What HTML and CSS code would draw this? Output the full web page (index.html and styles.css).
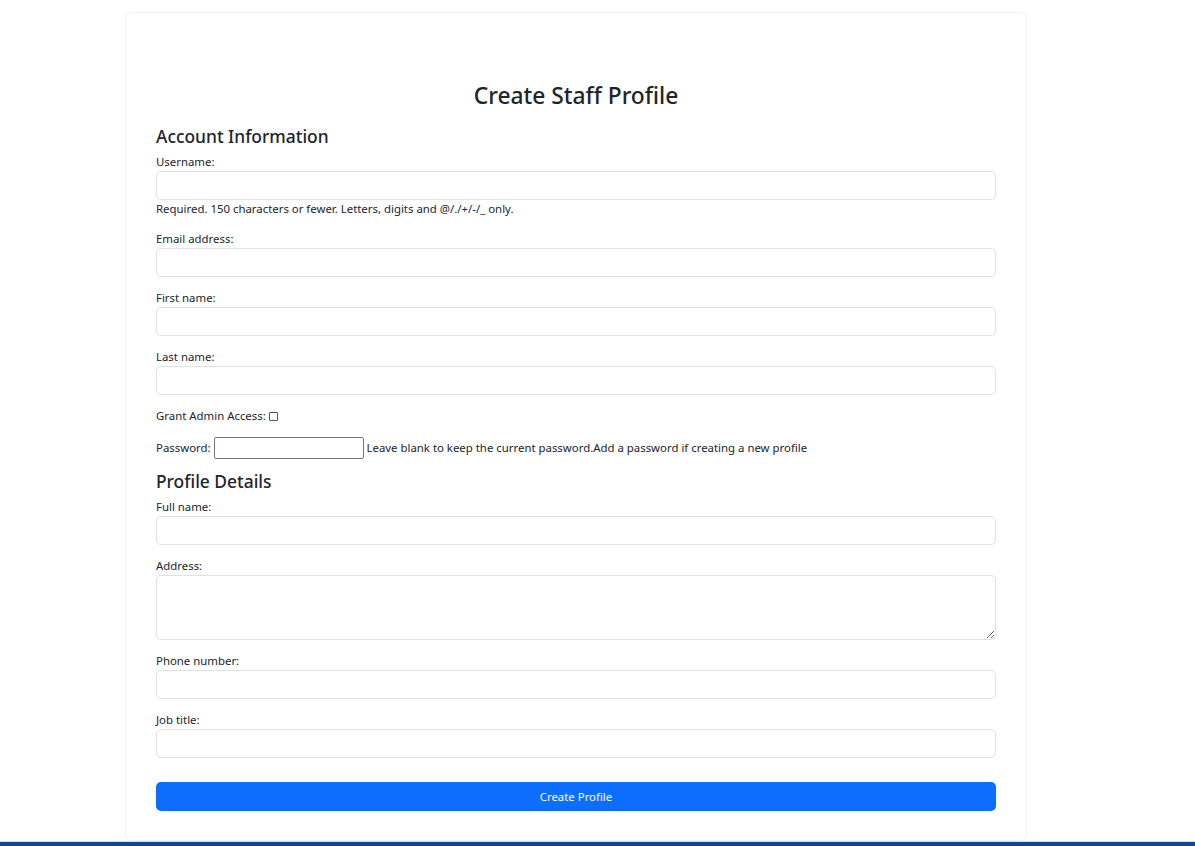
FILE: index.html
```html
<!DOCTYPE html>
<html lang="en">
<head>
<meta charset="utf-8">
<title>Create Staff Profile</title>
<link rel="stylesheet" href="styles.css">
</head>
<body>
<main class="page">
  <section class="card">
    <h2 class="title">Create Staff Profile</h2>
    <form class="form">
      <h4 class="section-head">Account Information</h4>
      <div class="group">
        <label class="label" for="username">Username:</label>
        <input class="control" id="username" type="text">
        <div class="help">Required. 150 characters or fewer. Letters, digits and @/./+/-/_ only.</div>
      </div>
      <div class="group">
        <label class="label" for="email">Email address:</label>
        <input class="control" id="email" type="email">
      </div>
      <div class="group">
        <label class="label" for="first">First name:</label>
        <input class="control" id="first" type="text">
      </div>
      <div class="group">
        <label class="label" for="last">Last name:</label>
        <input class="control" id="last" type="text">
      </div>
      <p class="inline-row">Grant Admin Access: <input class="check" type="checkbox"></p>
      <p class="inline-row pw-row">Password: <input class="pw" type="password"> Leave blank to keep the current password.Add a password if creating a new profile</p>
      <h4 class="section-head">Profile Details</h4>
      <div class="group">
        <label class="label" for="full">Full name:</label>
        <input class="control" id="full" type="text">
      </div>
      <div class="group">
        <label class="label" for="address">Address:</label>
        <textarea class="control area" id="address"></textarea>
      </div>
      <div class="group">
        <label class="label" for="phone">Phone number:</label>
        <input class="control" id="phone" type="text">
      </div>
      <div class="group">
        <label class="label" for="job">Job title:</label>
        <input class="control" id="job" type="text">
      </div>
      <button class="btn" type="button">Create Profile</button>
    </form>
  </section>
</main>
<footer class="footer"></footer>
</body>
</html>
```
FILE: styles.css
```css
* { box-sizing: border-box; }
html, body { margin: 0; padding: 0; background: #fff; }
body {
  font-family: "Noto Sans", "Open Sans", sans-serif;
  color: #212529;
  font-size: 11.4px;
}
.page {
  padding: 12px 0 0 125px;
}
.card {
  width: 902px;
  border: 1px solid #f1f2f3;
  border-radius: 6px;
  box-shadow: 0 1px 3px rgba(0,0,0,0.04);
  padding: 30px 30px 29px 30px;
}
.title {
  margin: 38px 0 14px;
  font-size: 22.8px;
  line-height: 29px;
  font-weight: 500;
  text-align: center;
}
.form { display: flex; flex-direction: column; }
.section-head {
  margin: 0 0 5px;
  font-size: 17.4px;
  line-height: 24px;
  font-weight: 500;
}
.group {
  display: flex;
  flex-direction: column;
  margin-bottom: 12px;
}
.label {
  line-height: 18px;
}
.control {
  height: 29px;
  width: 100%;
  border: 1px solid #dee2e6;
  border-radius: 5px;
  padding: 4px 8px;
  font: inherit;
  background: #fff;
  outline: none;
}
.area {
  height: 65px;
  resize: vertical;
  display: block;
}
.help {
  line-height: 18px;
}
.inline-row {
  margin: 0 0 12px;
  line-height: 18px;
}
.pw-row {
  height: 22px;
  line-height: 22px;
  margin-bottom: 10px;
}
.check {
  appearance: none;
  -webkit-appearance: none;
  width: 9px;
  height: 9px;
  margin: 0;
  vertical-align: -1px;
  border: 1px solid #555;
  border-radius: 1px;
  background: #fff;
}
.pw {
  width: 150px;
  height: 22px;
  margin: 0;
  vertical-align: top;
  border: 1px solid #767676;
  border-radius: 2px;
  padding: 1px 2px;
  font: inherit;
}
.btn {
  margin-top: 12px;
  height: 29px;
  width: 100%;
  border: none;
  border-radius: 5px;
  background: #0d6efd;
  color: #fff;
  font: inherit;
}
.footer {
  height: 6px;
  border-top: 1px solid #d6dbe0;
  background: #0a4a8a;
}
```
